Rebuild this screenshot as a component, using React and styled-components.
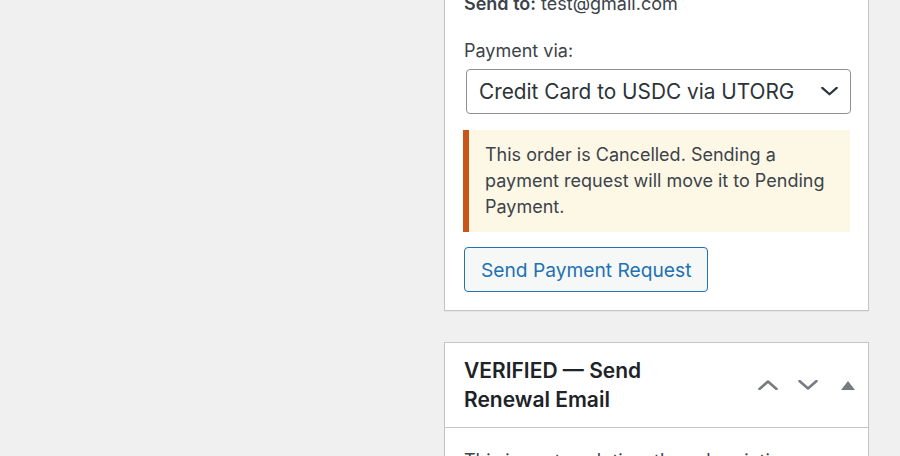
import React from "react";
import styled, { createGlobalStyle } from "styled-components";

const GlobalStyle = createGlobalStyle`
  html, body {
    margin: 0;
    padding: 0;
    background: #f0f0f1;
    font-family: Inter, "Noto Sans", "Liberation Sans", sans-serif;
    color: #1d2327;
    overflow: hidden;
  }
`;

const Page = styled.div`
  display: flex;
  justify-content: flex-end;
  height: 456px;
  padding-right: 31px;
  overflow: hidden;
`;

const Sidebar = styled.div`
  width: 425px;
  margin-top: -30px;
  display: flex;
  flex-direction: column;
  gap: 31px;
`;

const Card = styled.div`
  background: #fff;
  border: 1px solid #c3c4c7;
  box-shadow: 0 1px 1px rgba(0, 0, 0, 0.04);
`;

const CardBody = styled.div`
  padding: 20px 19px 18px 19px;
  font-size: 18px;
  line-height: 26px;
  color: #3c434a;
`;

const SendTo = styled.p`
  margin: 0 0 21px;
  strong {
    font-weight: 600;
  }
`;

const Label = styled.label`
  display: block;
  margin-bottom: 5px;
`;

const SelectBox = styled.div`
  box-sizing: border-box;
  width: 385px;
  height: 45px;
  margin-left: 2px;
  border: 1px solid #8c8f94;
  border-radius: 4px;
  display: flex;
  align-items: center;
  justify-content: space-between;
  padding: 0 12px;
  font-size: 20.8px;
  color: #2c3338;
`;

const Notice = styled.div`
  margin-top: 16px;
  box-sizing: border-box;
  width: 387px;
  margin-left: -1px;
  background: #fdf8e6;
  border-left: 6px solid #c8561a;
  padding: 12px 14px 12px 16px;
  color: #3c434a;
`;

const Button = styled.button`
  margin-top: 15px;
  box-sizing: border-box;
  height: 45px;
  padding: 0 16px;
  background: #f6f7f7;
  border: 1.5px solid #2271b1;
  border-radius: 4px;
  color: #2271b1;
  font-family: inherit;
  font-size: 19.2px;
`;

const Header = styled.div`
  display: flex;
  align-items: center;
  border-bottom: 1px solid #c3c4c7;
  padding: 13px 0 13px 19px;
`;

const Title = styled.h2`
  margin: 0;
  flex: 1;
  max-width: 250px;
  font-size: 21px;
  line-height: 29px;
  font-weight: 600;
  color: #1d2327;
`;

const Actions = styled.div`
  margin-left: auto;
  display: flex;
`;

const Handle = styled.button`
  width: 40px;
  height: 40px;
  padding: 0;
  background: none;
  border: none;
  display: flex;
  align-items: center;
  justify-content: center;
  color: #787c82;
`;

const BodyText = styled.p`
  margin: 0;
  padding: 20px 19px;
  font-size: 18px;
  line-height: 26px;
  color: #3c434a;
`;

const Chevron = ({ up, color = "currentColor", w = 20 }) => (
  <svg width={w} height={w / 2} viewBox="0 0 20 10" fill="none">
    <path
      d={up ? "M1.5 9 L10 1.5 L18.5 9" : "M1.5 1 L10 8.5 L18.5 1"}
      stroke={color}
      strokeWidth="2.6"
      strokeLinecap="round"
      strokeLinejoin="round"
    />
  </svg>
);

const Triangle = () => (
  <svg width="14" height="9" viewBox="0 0 14 9">
    <path d="M7 0 L14 9 L0 9 Z" fill="#787c82" />
  </svg>
);

export default function App() {
  return (
    <>
      <GlobalStyle />
      <Page>
        <Sidebar>
          <Card>
            <CardBody>
              <SendTo>
                <strong>Send to:</strong> test@gmail.com
              </SendTo>
              <Label>Payment via:</Label>
              <SelectBox>
                <span>Credit Card to USDC via UTORG</span>
                <Chevron color="#2c3338" w={17} />
              </SelectBox>
              <Notice>
                This order is Cancelled. Sending a payment request will move it
                to Pending Payment.
              </Notice>
              <Button>Send Payment Request</Button>
            </CardBody>
          </Card>
          <Card>
            <Header>
              <Title>VERIFIED — Send Renewal Email</Title>
              <Actions>
                <Handle>
                  <Chevron up />
                </Handle>
                <Handle>
                  <Chevron />
                </Handle>
                <Handle>
                  <Triangle />
                </Handle>
              </Actions>
            </Header>
            <BodyText>
              This is sent each time the subscription renewal order is created.
            </BodyText>
          </Card>
        </Sidebar>
      </Page>
    </>
  );
}
